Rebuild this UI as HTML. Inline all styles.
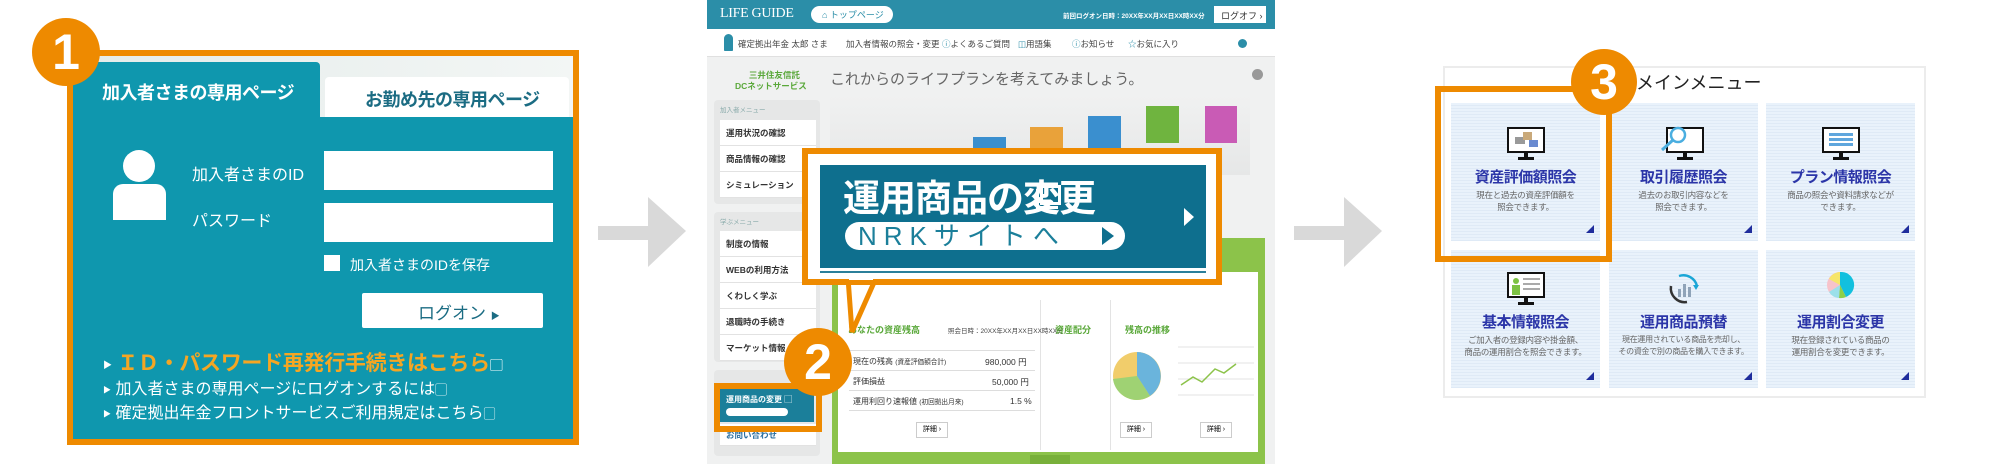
<!DOCTYPE html>
<html><head><meta charset="utf-8">
<style>
*{margin:0;padding:0;box-sizing:border-box}
body{width:2000px;height:464px;background:#fff;position:relative;overflow:hidden;font-family:"Liberation Sans","Noto Sans CJK JP",sans-serif}
.a{position:absolute}
.circ{position:absolute;border-radius:50%;background:#ee8a00;color:#fff;font-weight:bold;text-align:center;font-family:"Liberation Sans",sans-serif}
.ob{position:absolute;border:6px solid #ee8a00}
.t{position:absolute;white-space:nowrap}
.tile{position:absolute;width:149px;height:138px;background:repeating-linear-gradient(#e9f2fb 0 2px,#dfeaf6 2px 3px);text-align:center;overflow:hidden}
.tile .ti{position:absolute;left:0;right:0;top:63px;font-size:15px;font-weight:bold;color:#2b35a8;letter-spacing:-0.5px}
.tile .de{position:absolute;left:0;right:0;top:86px;font-size:8.5px;line-height:12px;color:#666;letter-spacing:-0.3px}
.tile .tr{position:absolute;right:6px;bottom:8px;width:0;height:0;border-left:8px solid transparent;border-bottom:8px solid #1f2d9c}
.side{position:absolute;left:720px;width:96px;background:#fff;font-size:8.5px;font-weight:bold;color:#333;padding-left:6px;border-bottom:1px solid #e2e2e2;overflow:hidden;white-space:nowrap}
</style></head><body>

<!-- PANEL 1 -->
<div class="a" style="left:67px;top:50px;width:512px;height:395px;background:#ee8a00"></div>
<div class="a" style="left:73px;top:56px;width:500px;height:383px;background:linear-gradient(90deg,#e4ecea,#f3f6f5)"></div>
<div class="a" style="left:73px;top:62px;width:247px;height:60px;background:#0f97ae;border-radius:4px 4px 0 0"></div>
<div class="a" style="left:325px;top:77px;width:244px;height:40px;background:#fff;border-radius:4px 4px 0 0"></div>
<div class="a" style="left:73px;top:117px;width:500px;height:322px;background:#0f97ae"></div>
<div class="t" style="left:102px;top:79px;font-size:18px;font-weight:bold;color:#fff;letter-spacing:-0.5px">加入者さまの専用ページ</div>
<div class="t" style="left:365px;top:86px;font-size:18px;font-weight:bold;color:#1b6c83;letter-spacing:-0.5px">お勤め先の専用ページ</div>
<div class="a" style="left:123px;top:150px;width:32px;height:32px;border-radius:50%;background:#fff"></div>
<div class="a" style="left:113px;top:184px;width:53px;height:36px;background:#fff;border-radius:10px 10px 0 0"></div>
<div class="t" style="left:192px;top:161px;font-size:16px;color:#fff">加入者さまのID</div>
<div class="t" style="left:192px;top:207px;font-size:16px;color:#fff">パスワード</div>
<div class="a" style="left:324px;top:151px;width:229px;height:39px;background:#fff"></div>
<div class="a" style="left:324px;top:203px;width:229px;height:39px;background:#fff"></div>
<div class="a" style="left:324px;top:255px;width:16px;height:16px;background:#fff"></div>
<div class="t" style="left:350px;top:255px;font-size:14px;color:#fff">加入者さまのIDを保存</div>
<div class="a" style="left:362px;top:293px;width:181px;height:35px;background:#fff;border-radius:2px"></div>
<div class="t" style="left:418px;top:299px;font-size:17px;color:#1b6c83">ログオン <span style="font-size:9px">▶</span></div>
<div class="t" style="left:103px;top:347px;font-size:21px;font-weight:bold;color:#f5a623;letter-spacing:-0.3px"><span style="font-size:9px;color:#fff;vertical-align:middle">▶</span> ＩＤ・パスワード再発行手続きはこちら<span style="font-size:13px;color:#fff">▢</span></div>
<div class="t" style="left:103px;top:375px;font-size:16px;color:#fff"><span style="font-size:8px;vertical-align:middle">▶</span> 加入者さまの専用ページにログオンするには<span style="font-size:12px">▢</span></div>
<div class="t" style="left:103px;top:399px;font-size:16px;color:#fff"><span style="font-size:8px;vertical-align:middle">▶</span> 確定拠出年金フロントサービスご利用規定はこちら<span style="font-size:12px">▢</span></div>
<div class="circ" style="left:32px;top:18px;width:68px;height:68px;font-size:50px;line-height:68px">1</div>

<!-- ARROWS -->
<svg class="a" style="left:0;top:0" width="2000" height="464">
<path d="M598 226H648V197L686 231L648 267V240H598Z" fill="#d9d9d9"/>
<path d="M1294 226H1344V197L1382 231L1344 267V240H1294Z" fill="#d9d9d9"/>
</svg>

<!-- PANEL 2 -->
<div class="a" style="left:707px;top:0;width:568px;height:464px;background:#f0f1f1"></div>
<div class="a" style="left:707px;top:0;width:568px;height:29px;background:#2b8ea8"></div>
<div class="t" style="left:720px;top:6px;font-family:'Liberation Serif',serif;font-size:14px;color:#fff;letter-spacing:-0.3px">LIFE GUIDE</div>
<div class="a" style="left:811px;top:6px;width:82px;height:17px;background:#fff;border-radius:9px"></div>
<div class="t" style="left:822px;top:8px;font-size:9px;color:#2b8ea8">⌂ トップページ</div>
<div class="t" style="left:1063px;top:10px;font-size:6.5px;color:#fff;font-weight:bold">前回ログオン日時：20XX年XX月XX日XX時XX分</div>
<div class="a" style="left:1214px;top:6px;width:52px;height:17px;background:#fff"></div>
<div class="t" style="left:1221px;top:9px;font-size:9px;color:#333">ログオフ ›</div>
<div class="a" style="left:707px;top:29px;width:568px;height:28px;background:#fff;border-bottom:1px solid #e0e0e0"></div>
<div class="a" style="left:724px;top:34px;width:9px;height:17px;background:#2b8ea8;border-radius:5px 5px 1px 1px"></div>
<div class="t" style="left:738px;top:38px;font-size:8.5px;color:#444">確定拠出年金 太郎 さま</div>
<div class="t" style="left:846px;top:38px;font-size:8.5px;color:#444">加入者情報の照会・変更</div>
<div class="t" style="left:942px;top:38px;font-size:8.5px;color:#444"><span style="color:#2b8ea8">ⓘ</span>よくあるご質問</div>
<div class="t" style="left:1018px;top:38px;font-size:8.5px;color:#444"><span style="color:#2b8ea8">◫</span>用語集</div>
<div class="t" style="left:1072px;top:38px;font-size:8.5px;color:#444"><span style="color:#2b8ea8">ⓘ</span>お知らせ</div>
<div class="t" style="left:1128px;top:38px;font-size:8.5px;color:#444"><span style="color:#2b8ea8">☆</span>お気に入り</div>
<div class="a" style="left:1238px;top:39px;width:9px;height:9px;border-radius:50%;background:#2b8ea8"></div>
<div class="t" style="left:735px;top:70px;font-size:8.5px;color:#5aa83a;font-weight:bold;text-align:center;line-height:11px">&nbsp;&nbsp;&nbsp;三井住友信託<br>DCネットサービス</div>
<div class="t" style="left:830px;top:68px;font-size:15px;color:#666">これからのライフプランを考えてみましょう。</div>
<div class="a" style="left:1252px;top:69px;width:11px;height:11px;border-radius:50%;background:#999"></div>
<div class="a" style="left:830px;top:95px;width:420px;height:80px;background:linear-gradient(#f0f1f1,#e6e7e7)"></div>
<div class="a" style="left:973px;top:137px;width:33px;height:20px;background:#3a8fcf"></div>
<div class="a" style="left:1030px;top:127px;width:33px;height:25px;background:#e9a23a"></div>
<div class="a" style="left:1088px;top:116px;width:33px;height:34px;background:#3a8fcf"></div>
<div class="a" style="left:1146px;top:106px;width:33px;height:37px;background:#6fb43f"></div>
<div class="a" style="left:1205px;top:106px;width:32px;height:37px;background:#c95bb5"></div>
<!-- sidebar -->
<div class="a" style="left:714px;top:100px;width:106px;height:104px;background:#e6e7e7;border-radius:4px"></div>
<div class="t" style="left:720px;top:104px;font-size:6.5px;color:#8aa">加入者メニュー</div>
<div class="side" style="top:120px;height:26px;line-height:26px">運用状況の確認</div>
<div class="side" style="top:146px;height:26px;line-height:26px">商品情報の確認</div>
<div class="side" style="top:172px;height:26px;line-height:26px">シミュレーション</div>
<div class="a" style="left:714px;top:212px;width:106px;height:150px;background:#e6e7e7;border-radius:4px"></div>
<div class="t" style="left:720px;top:216px;font-size:6.5px;color:#8aa">学ぶメニュー</div>
<div class="side" style="top:231px;height:26px;line-height:26px">制度の情報</div>
<div class="side" style="top:257px;height:26px;line-height:26px">WEBの利用方法</div>
<div class="side" style="top:283px;height:26px;line-height:26px">くわしく学ぶ</div>
<div class="side" style="top:309px;height:26px;line-height:26px">退職時の手続き</div>
<div class="side" style="top:335px;height:26px;line-height:26px">マーケット情報</div>
<div class="a" style="left:714px;top:370px;width:106px;height:86px;background:#e6e7e7;border-radius:4px"></div>
<div class="a" style="left:720px;top:388px;width:94px;height:34px;background:#1b7f9a"></div>
<div class="t" style="left:726px;top:394px;font-size:8px;color:#fff;font-weight:bold">運用商品の変更 ▢</div>
<div class="a" style="left:726px;top:408px;width:62px;height:8px;background:#fff;border-radius:4px"></div>
<div class="side" style="top:424px;height:22px;line-height:22px;color:#2b6fa0">お問い合わせ</div>
<!-- green panel -->
<div class="a" style="left:832px;top:238px;width:433px;height:226px;background:#8cc34a"></div>
<div class="a" style="left:838px;top:272px;width:420px;height:180px;background:#fff"></div>
<div class="a" style="left:1040px;top:300px;width:1px;height:150px;background:#e3e3e3"></div>
<div class="a" style="left:1110px;top:300px;width:1px;height:150px;background:#e3e3e3"></div>
<div class="t" style="left:848px;top:323px;font-size:9px;color:#5aa83a;font-weight:bold">あなたの資産残高</div>
<div class="t" style="left:948px;top:325px;font-size:6.5px;color:#444">照会日時：20XX年XX月XX日XX時XX分</div>
<div class="t" style="left:1055px;top:323px;font-size:9px;color:#5aa83a;font-weight:bold">資産配分</div>
<div class="t" style="left:1125px;top:323px;font-size:9px;color:#5aa83a;font-weight:bold">残高の推移</div>
<div class="a" style="left:849px;top:350px;width:186px;height:1px;background:#ddd"></div>
<div class="t" style="left:853px;top:356px;font-size:8px;color:#333">現在の残高 <small>(資産評価額合計)</small></div><div class="t" style="left:985px;top:356px;font-size:8.5px;color:#333">980,000 円</div>
<div class="a" style="left:849px;top:370px;width:186px;height:1px;background:#ddd"></div>
<div class="t" style="left:853px;top:376px;font-size:8px;color:#333">評価損益</div><div class="t" style="left:992px;top:376px;font-size:8.5px;color:#333">50,000 円</div>
<div class="a" style="left:849px;top:390px;width:186px;height:1px;background:#ddd"></div>
<div class="t" style="left:853px;top:396px;font-size:8px;color:#333">運用利回り速報値 <small>(初回拠出月来)</small></div><div class="t" style="left:1010px;top:396px;font-size:8.5px;color:#333">1.5 %</div>
<div class="a" style="left:849px;top:410px;width:186px;height:1px;background:#ddd"></div>
<svg class="a" style="left:1110px;top:345px" width="60" height="60"><circle cx="27" cy="31" r="24" fill="#f1cd6b"/><path d="M27 31V7A24 24 0 0 1 40 51Z" fill="#6ab4dc"/><path d="M27 31L40 51A24 24 0 0 1 3 34Z" fill="#9fd273"/></svg>
<svg class="a" style="left:1178px;top:345px" width="80" height="60"><g stroke="#e3e3e3"><line x1="0" y1="2" x2="76" y2="2"/><line x1="0" y1="18" x2="76" y2="18"/><line x1="0" y1="34" x2="76" y2="34"/><line x1="0" y1="50" x2="76" y2="50"/></g><polyline points="3,40 15,32 24,37 37,24 46,28 58,19" fill="none" stroke="#8cc34a" stroke-width="1.5"/></svg>
<div class="a" style="left:916px;top:422px;width:32px;height:16px;border:1px solid #ccc;font-size:7px;text-align:center;line-height:14px">詳細 ›</div>
<div class="a" style="left:1120px;top:422px;width:32px;height:16px;border:1px solid #ccc;font-size:7px;text-align:center;line-height:14px">詳細 ›</div>
<div class="a" style="left:1200px;top:422px;width:32px;height:16px;border:1px solid #ccc;font-size:7px;text-align:center;line-height:14px">詳細 ›</div>
<div class="a" style="left:1030px;top:455px;width:40px;height:9px;background:#78b03a"></div>
<!-- small highlight box -->
<div class="ob" style="left:714px;top:383px;width:108px;height:49px"></div>
<!-- callout -->
<svg class="a" style="left:0;top:0" width="2000" height="464">
<path d="M848 278L852 332L876 278Z" fill="#fff" stroke="#ee8a00" stroke-width="5" stroke-linejoin="miter"/>
</svg>
<div class="ob" style="left:802px;top:148px;width:420px;height:137px;background:#fff"></div>
<div class="a" style="left:849px;top:272px;width:24px;height:8px;background:#fff"></div>
<div class="a" style="left:820px;top:165px;width:386px;height:106px;background:#0e6f8e;border-bottom:3px solid #fff;box-shadow:0 2px 0 #2b7f9a"></div>
<div class="t" style="left:843px;top:176px;font-size:37px;font-weight:bold;color:#fff;line-height:46px;letter-spacing:-1px">運用商品の変更</div>
<div class="a" style="left:1036px;top:189px;width:22px;height:20px;border:3px solid #fff;border-top:none;border-right:none"></div>
<div class="a" style="left:1040px;top:185px;width:21px;height:20px;border:3px solid #fff"></div>
<div class="a" style="left:845px;top:222px;width:280px;height:28px;background:#fff;border-radius:14px"></div>
<div class="t" style="left:858px;top:220px;font-size:26px;color:#1b7f9a;letter-spacing:7px;line-height:32px">NRKサイトへ</div>
<svg class="a" style="left:1100px;top:226px" width="16" height="20"><path d="M2 1L14 10L2 19Z" fill="#0e6f8e"/></svg>
<svg class="a" style="left:1182px;top:206px" width="14" height="22"><path d="M2 2L12 11L2 20Z" fill="#fff"/></svg>
<div class="circ" style="left:784px;top:328px;width:68px;height:68px;font-size:50px;line-height:68px">2</div>

<!-- PANEL 3 -->
<div class="a" style="left:1443px;top:66px;width:483px;height:332px;border:2px solid #ececec"></div>
<div class="t" style="left:1636px;top:69px;font-size:18px;color:#222">メインメニュー</div>

<div class="tile" style="left:1451px;top:103px">
<svg class="a" style="left:56px;top:24px" width="38" height="34"><rect x="1" y="1" width="36" height="24" fill="#fff" stroke="#111" stroke-width="2"/><rect x="8" y="10" width="10" height="7" fill="#999"/><rect x="16" y="5" width="9" height="8" fill="#c9a97a"/><rect x="22" y="13" width="9" height="7" fill="#6a8ad0"/><rect x="17" y="25" width="4" height="5" fill="#111"/><rect x="11" y="30" width="16" height="3" fill="#111"/></svg>
<div class="ti">資産評価額照会</div><div class="de">現在と過去の資産評価額を<br>照会できます。</div><div class="tr"></div></div>
<div class="tile" style="left:1609px;top:103px">
<svg class="a" style="left:50px;top:22px" width="46" height="36"><rect x="8" y="3" width="36" height="24" fill="#fff" stroke="#111" stroke-width="2"/><circle cx="19" cy="10" r="7" fill="#fff" stroke="#4aaee0" stroke-width="2.5"/><line x1="14" y1="15" x2="3" y2="25" stroke="#4aaee0" stroke-width="3"/><rect x="24" y="27" width="4" height="5" fill="#111"/><rect x="18" y="32" width="16" height="3" fill="#111"/></svg>
<div class="ti">取引履歴照会</div><div class="de">過去のお取引内容などを<br>照会できます。</div><div class="tr"></div></div>
<div class="tile" style="left:1766px;top:103px">
<svg class="a" style="left:56px;top:24px" width="38" height="34"><rect x="1" y="1" width="36" height="24" fill="#fff" stroke="#111" stroke-width="2"/><g fill="#5fa6dd"><rect x="7" y="6" width="24" height="3"/><rect x="7" y="11" width="24" height="3"/><rect x="7" y="16" width="24" height="3"/></g><rect x="17" y="25" width="4" height="5" fill="#111"/><rect x="11" y="30" width="16" height="3" fill="#111"/></svg>
<div class="ti">プラン情報照会</div><div class="de">商品の照会や資料請求などが<br>できます。</div><div class="tr"></div></div>
<div class="tile" style="left:1451px;top:250px">
<svg class="a" style="left:56px;top:22px" width="38" height="34"><rect x="1" y="1" width="36" height="24" fill="#fff" stroke="#111" stroke-width="2"/><circle cx="9" cy="9" r="3" fill="#7cc243"/><rect x="5" y="13" width="8" height="10" fill="#7cc243"/><g fill="#aaa"><rect x="16" y="6" width="17" height="2"/><rect x="16" y="11" width="17" height="2"/><rect x="16" y="16" width="17" height="2"/></g><rect x="17" y="25" width="4" height="5" fill="#111"/><rect x="11" y="30" width="16" height="3" fill="#111"/></svg>
<div class="ti" style="top:61px">基本情報照会</div><div class="de" style="top:84px">ご加入者の登録内容や掛金額、<br>商品の運用割合を照会できます。</div><div class="tr"></div></div>
<div class="tile" style="left:1609px;top:250px">
<svg class="a" style="left:56px;top:22px" width="38" height="34"><path d="M6 14A14 14 0 0 0 22 30" fill="none" stroke="#333" stroke-width="2.5"/><path d="M14 4A14 14 0 0 1 32 14" fill="none" stroke="#1aa6d6" stroke-width="2.5"/><path d="M28 13L34 13L31 18Z" fill="#1aa6d6"/><g fill="#8fa3b8"><rect x="13" y="17" width="3" height="8"/><rect x="18" y="12" width="3" height="13"/><rect x="23" y="15" width="3" height="10"/></g></svg>
<div class="ti" style="top:61px">運用商品預替</div><div class="de" style="top:84px;font-size:8px">現在運用されている商品を売却し、<br>その資金で別の商品を購入できます。</div><div class="tr"></div></div>
<div class="tile" style="left:1766px;top:250px">
<svg class="a" style="left:60px;top:20px" width="30" height="32"><circle cx="14" cy="15" r="13" fill="#f7c3cb"/><path d="M14 15V2A13 13 0 0 1 20 27Z" fill="#12c0de"/><path d="M14 15L20 27A13 13 0 0 1 13 28Z" fill="#8cd048"/><path d="M14 15L13 28A13 13 0 0 1 3 22Z" fill="#9ce0ea"/><path d="M14 15V2A13 13 0 0 0 3 9Z" fill="#f6e66a"/></svg>
<div class="ti" style="top:61px">運用割合変更</div><div class="de" style="top:84px">現在登録されている商品の<br>運用割合を変更できます。</div><div class="tr"></div></div>

<div class="ob" style="left:1435px;top:86px;width:177px;height:176px"></div>
<div class="circ" style="left:1571px;top:49px;width:66px;height:66px;font-size:50px;line-height:66px">3</div>
</body></html>
